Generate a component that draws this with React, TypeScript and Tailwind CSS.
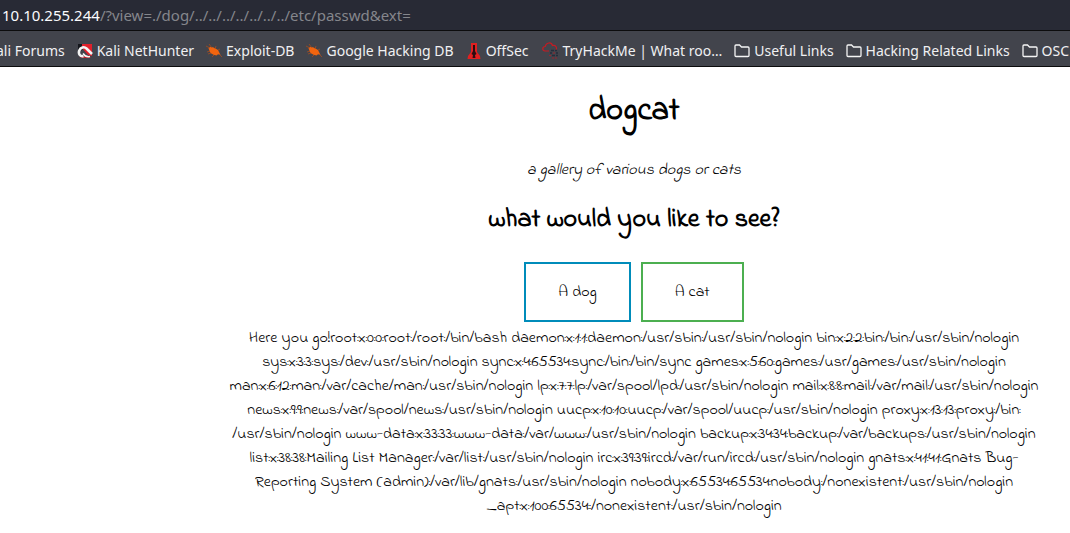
import type { ReactNode } from 'react';

function Magnet() {
  return (
    <svg width="16" height="16" viewBox="0 0 16 16" aria-hidden="true">
      <path d="M1 1h10L5 7 1 9z" fill="#14161c" />
      <path d="M5 1h10v12l-4-1-6-7z" fill="#e0202b" />
      <path d="M2 14l4 1 8 0-3-2z" fill="#c41e28" />
      <path d="M15 11 9.500 5.500C7 3.200 3.500 4.500 2.300 7.500 1 11 3.500 14 6.500 13" fill="none" stroke="#f3f3f3" strokeWidth="2.600" />
      <path d="M6 10.500c1.500 2.500 4 3.500 7 3" fill="none" stroke="#f3f3f3" strokeWidth="1.500" />
    </svg>
  );
}

function Bug() {
  return (
    <svg width="16" height="16" viewBox="0 0 16 16" aria-hidden="true">
      <path d="M2.500 5 4 4l3 .3 2.500 1.200L12 7l1 2 1.500 3-2.500-.7-1.500 1.200-3-.8L4.500 10l-1-2z" fill="#f0640f" />
      <path d="M4 5 0 3M6 5 3 1M9 6l1-3M4 8 1 9M5 10l-3 1M8 12l-2 2M12 7l2-1M13 11l3 3" stroke="#b34d19" strokeWidth=".7" />
    </svg>
  );
}

function Tower() {
  return (
    <svg width="16" height="16" viewBox="0 0 16 16" aria-hidden="true">
      <path d="M5 0h6v9l3 4 .5 3h-13L2 13l3-4z" fill="#e02020" />
      <path d="M7 2h2v6l1.500 3-1.500 1 .5 3h-3l.5-3-1.500-1L7 8z" fill="#2b0c10" />
    </svg>
  );
}

function Cloud() {
  return (
    <svg width="18" height="17" viewBox="0 0 18 17" fill="none" aria-hidden="true">
      <path d="M8 9H4C.8 8.500 1.200 4.700 4.200 4.500 5 .2 10.500-.2 11.500 3.500c3-.7 5.200 2 3.500 4.500" stroke="#c41b22" strokeWidth="1.200" />
      <path d="M10 8.500h3M14 8.500h2M9 11h2M15 11h2M11 13.500h3M15 13.500h2" stroke="#262d3b" strokeWidth="1.400" />
      <path d="M12 11h2M8 13.500h2M11 16h2M14 16h2" stroke="#9b222b" strokeWidth="1.200" />
    </svg>
  );
}

function Folder() {
  return (
    <svg width="16" height="16" viewBox="0 0 16 16" fill="none" aria-hidden="true">
      <path d="M2 2h3.500L7.500 4H14a1 1 0 0 1 1 1v7.500a1 1 0 0 1-1 1H2a1 1 0 0 1-1-1V3a1 1 0 0 1 1-1z" stroke="#f5f5f5" strokeWidth="1.300" />
    </svg>
  );
}

function Bookmark({ icon, children }: { icon?: ReactNode; children: ReactNode }) {
  return (
    <a href="#" className="flex shrink-0 items-center gap-1">
      {icon}
      <span>{children}</span>
    </a>
  );
}

const lines = [
  'Here you go!root:x:0:0:root:/root:/bin/bash daemon:x:1:1:daemon:/usr/sbin:/usr/sbin/nologin bin:x:2:2:bin:/bin:/usr/sbin/nologin',
  'sys:x:3:3:sys:/dev:/usr/sbin/nologin sync:x:4:65534:sync:/bin:/bin/sync games:x:5:60:games:/usr/games:/usr/sbin/nologin',
  'man:x:6:12:man:/var/cache/man:/usr/sbin/nologin lp:x:7:7:lp:/var/spool/lpd:/usr/sbin/nologin mail:x:8:8:mail:/var/mail:/usr/sbin/nologin',
  'news:x:9:9:news:/var/spool/news:/usr/sbin/nologin uucp:x:10:10:uucp:/var/spool/uucp:/usr/sbin/nologin proxy:x:13:13:proxy:/bin:',
  '/usr/sbin/nologin www-data:x:33:33:www-data:/var/www:/usr/sbin/nologin backup:x:34:34:backup:/var/backups:/usr/sbin/nologin',
  'list:x:38:38:Mailing List Manager:/var/list:/usr/sbin/nologin irc:x:39:39:ircd:/var/run/ircd:/usr/sbin/nologin gnats:x:41:41:Gnats Bug-',
  'Reporting System (admin):/var/lib/gnats:/usr/sbin/nologin nobody:x:65534:65534:nobody:/nonexistent:/usr/sbin/nologin',
  '_apt:x:100:65534::/nonexistent:/usr/sbin/nologin',
];

export default function App() {
  return (
    <div className="min-h-screen overflow-hidden bg-white text-black">
      <header className="font-['Noto_Sans',sans-serif] whitespace-nowrap">
        <div className="flex h-[30px] items-center bg-[#282a35] pl-[2px] text-[15px] text-[#85868c]">
          <span className="text-[#fbfbfe]">10.10.255.244</span>
          <span>/?view=./dog/../../../../../../../etc/passwd&amp;ext=</span>
        </div>
        <nav aria-label="Bookmarks" className="flex h-[37px] items-center border-y border-[#0c0c0d] bg-[#42444c] pt-1 text-[14px] text-[#f0f0f2]">
          <div className="-ml-1 flex shrink-0 items-center gap-3">
            <Bookmark>ali Forums</Bookmark>
            <Bookmark icon={<Magnet />}>Kali NetHunter</Bookmark>
            <Bookmark icon={<Bug />}>Exploit-DB</Bookmark>
            <Bookmark icon={<Bug />}>Google Hacking DB</Bookmark>
            <Bookmark icon={<Tower />}>OffSec</Bookmark>
            <Bookmark icon={<Cloud />}>TryHackMe | What roo…</Bookmark>
            <Bookmark icon={<Folder />}>Useful Links</Bookmark>
            <Bookmark icon={<Folder />}>Hacking Related Links</Bookmark>
            <Bookmark icon={<Folder />}>OSC</Bookmark>
          </div>
        </nav>
      </header>
      <main className="flex flex-col items-center pt-[21px] pl-[198px] text-center font-['Indie_Flower',cursive]">
        <h1 className="text-[32px] leading-[48px] font-bold">dogcat</h1>
        <p className="mt-[22px] text-[16px] leading-6 italic">a gallery of various dogs or cats</p>
        <h2 className="mt-5 text-[26px] leading-9 font-bold">what would you like to see?</h2>
        <div className="mt-6 flex gap-[10px] text-[16px] leading-6">
          <button type="button" className="border-2 border-[#008cba] px-8 py-4">A dog</button>
          <button type="button" className="border-2 border-[#4caf50] px-8 py-4">A cat</button>
        </div>
        <p className="mt-1 text-[16px] leading-6 whitespace-nowrap">
          {lines.map((line) => (
            <span key={line} className="block">{line}</span>
          ))}
        </p>
      </main>
    </div>
  );
}
